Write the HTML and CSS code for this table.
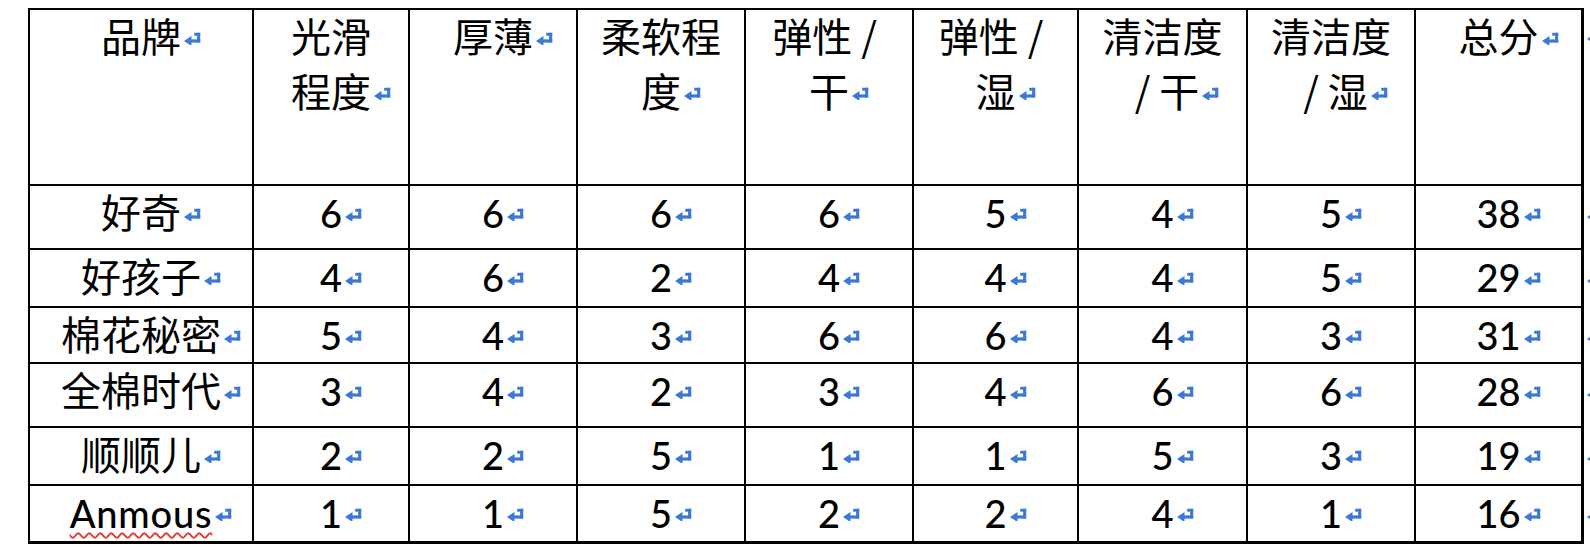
FILE: index.html
```html
<!DOCTYPE html>
<html lang="zh">
<head>
<meta charset="utf-8">
<title>品牌评分表</title>
<link rel="stylesheet" href="styles.css">
</head>
<body>
<svg class="defs" aria-hidden="true">
  <symbol id="pm" viewBox="0 0 17 13">
    <path d="M0 9 L7.5 4 L7.5 14 Z"/>
    <rect x="6" y="7.4" width="10.2" height="3.2"/>
    <rect x="13.1" y="0.8" width="3.1" height="9.6"/>
    <rect x="10.2" y="0.8" width="6" height="2.9"/>
  </symbol>
</svg>
<div class="sheet">
  <div class="grid">
    <div class="cell hd c1"><span class="zh">品牌</span><svg class="pm"><use href="#pm"/></svg></div>
    <div class="cell hd"><span class="zh">光滑<br>程度</span><svg class="pm"><use href="#pm"/></svg></div>
    <div class="cell hd"><span class="zh">厚薄</span><svg class="pm"><use href="#pm"/></svg></div>
    <div class="cell hd"><span class="zh">柔软程<br>度</span><svg class="pm"><use href="#pm"/></svg></div>
    <div class="cell hd"><span class="zh">弹性 /&nbsp;<br>干</span><svg class="pm"><use href="#pm"/></svg></div>
    <div class="cell hd"><span class="zh">弹性 /&nbsp;<br>湿</span><svg class="pm"><use href="#pm"/></svg></div>
    <div class="cell hd"><span class="zh">清洁度<br>&nbsp;/ 干</span><svg class="pm"><use href="#pm"/></svg></div>
    <div class="cell hd"><span class="zh">清洁度<br>&nbsp;/ 湿</span><svg class="pm"><use href="#pm"/></svg></div>
    <div class="cell hd c9"><span class="zh">总分</span><svg class="pm"><use href="#pm"/></svg></div>
    <div class="end"><svg class="pm"><use href="#pm"/></svg></div>

    <div class="cell c1"><span class="zh">好奇</span><svg class="pm"><use href="#pm"/></svg></div>
    <div class="cell">6<svg class="pm"><use href="#pm"/></svg></div>
    <div class="cell">6<svg class="pm"><use href="#pm"/></svg></div>
    <div class="cell">6<svg class="pm"><use href="#pm"/></svg></div>
    <div class="cell">6<svg class="pm"><use href="#pm"/></svg></div>
    <div class="cell">5<svg class="pm"><use href="#pm"/></svg></div>
    <div class="cell">4<svg class="pm"><use href="#pm"/></svg></div>
    <div class="cell">5<svg class="pm"><use href="#pm"/></svg></div>
    <div class="cell c9">38<svg class="pm"><use href="#pm"/></svg></div>
    <div class="end"><svg class="pm"><use href="#pm"/></svg></div>

    <div class="cell c1"><span class="zh">好孩子</span><svg class="pm"><use href="#pm"/></svg></div>
    <div class="cell">4<svg class="pm"><use href="#pm"/></svg></div>
    <div class="cell">6<svg class="pm"><use href="#pm"/></svg></div>
    <div class="cell">2<svg class="pm"><use href="#pm"/></svg></div>
    <div class="cell">4<svg class="pm"><use href="#pm"/></svg></div>
    <div class="cell">4<svg class="pm"><use href="#pm"/></svg></div>
    <div class="cell">4<svg class="pm"><use href="#pm"/></svg></div>
    <div class="cell">5<svg class="pm"><use href="#pm"/></svg></div>
    <div class="cell c9">29<svg class="pm"><use href="#pm"/></svg></div>
    <div class="end"><svg class="pm"><use href="#pm"/></svg></div>

    <div class="cell c1"><span class="zh">棉花秘密</span><svg class="pm"><use href="#pm"/></svg></div>
    <div class="cell">5<svg class="pm"><use href="#pm"/></svg></div>
    <div class="cell">4<svg class="pm"><use href="#pm"/></svg></div>
    <div class="cell">3<svg class="pm"><use href="#pm"/></svg></div>
    <div class="cell">6<svg class="pm"><use href="#pm"/></svg></div>
    <div class="cell">6<svg class="pm"><use href="#pm"/></svg></div>
    <div class="cell">4<svg class="pm"><use href="#pm"/></svg></div>
    <div class="cell">3<svg class="pm"><use href="#pm"/></svg></div>
    <div class="cell c9">31<svg class="pm"><use href="#pm"/></svg></div>
    <div class="end"><svg class="pm"><use href="#pm"/></svg></div>

    <div class="cell c1"><span class="zh">全棉时代</span><svg class="pm"><use href="#pm"/></svg></div>
    <div class="cell">3<svg class="pm"><use href="#pm"/></svg></div>
    <div class="cell">4<svg class="pm"><use href="#pm"/></svg></div>
    <div class="cell">2<svg class="pm"><use href="#pm"/></svg></div>
    <div class="cell">3<svg class="pm"><use href="#pm"/></svg></div>
    <div class="cell">4<svg class="pm"><use href="#pm"/></svg></div>
    <div class="cell">6<svg class="pm"><use href="#pm"/></svg></div>
    <div class="cell">6<svg class="pm"><use href="#pm"/></svg></div>
    <div class="cell c9">28<svg class="pm"><use href="#pm"/></svg></div>
    <div class="end"><svg class="pm"><use href="#pm"/></svg></div>

    <div class="cell c1"><span class="zh">顺顺儿</span><svg class="pm"><use href="#pm"/></svg></div>
    <div class="cell">2<svg class="pm"><use href="#pm"/></svg></div>
    <div class="cell">2<svg class="pm"><use href="#pm"/></svg></div>
    <div class="cell">5<svg class="pm"><use href="#pm"/></svg></div>
    <div class="cell">1<svg class="pm"><use href="#pm"/></svg></div>
    <div class="cell">1<svg class="pm"><use href="#pm"/></svg></div>
    <div class="cell">5<svg class="pm"><use href="#pm"/></svg></div>
    <div class="cell">3<svg class="pm"><use href="#pm"/></svg></div>
    <div class="cell c9">19<svg class="pm"><use href="#pm"/></svg></div>
    <div class="end"><svg class="pm"><use href="#pm"/></svg></div>

    <div class="cell c1 last"><span class="spell">Anmous</span><svg class="pm"><use href="#pm"/></svg></div>
    <div class="cell last">1<svg class="pm"><use href="#pm"/></svg></div>
    <div class="cell last">1<svg class="pm"><use href="#pm"/></svg></div>
    <div class="cell last">5<svg class="pm"><use href="#pm"/></svg></div>
    <div class="cell last">2<svg class="pm"><use href="#pm"/></svg></div>
    <div class="cell last">2<svg class="pm"><use href="#pm"/></svg></div>
    <div class="cell last">4<svg class="pm"><use href="#pm"/></svg></div>
    <div class="cell last">1<svg class="pm"><use href="#pm"/></svg></div>
    <div class="cell last c9">16<svg class="pm"><use href="#pm"/></svg></div>
    <div class="end"><svg class="pm"><use href="#pm"/></svg></div>
  </div>
</div>
</body>
</html>
```

FILE: styles.css
```css
html, body {
  margin: 0;
  padding: 0;
  background: #fff;
}

body {
  width: 1590px;
  height: 552px;
  overflow: hidden;
}

.defs {
  position: absolute;
  width: 0;
  height: 0;
  overflow: hidden;
}

.sheet {
  padding: 8px 0 0 28px;
}

.grid {
  display: grid;
  grid-template-columns: 226px 156px 168px 168px 168px 165px 169px 168px 168px 6px;
  grid-template-rows: 178px 64px 58px 56px 64px 58px 58px;
  font-family: Lato, "Noto Sans CJK SC", sans-serif;
  font-weight: 500;
  font-size: 38px;
  line-height: 55px;
  color: #000;
}

.cell {
  box-sizing: border-box;
  border-right: 2px solid #000;
  border-bottom: 2px solid #000;
  padding: 0 7px;
  text-align: center;
  white-space: nowrap;
}

.c1 {
  border-left: 2px solid #000;
}

.c9 {
  border-right-width: 3px;
}

.hd {
  border-top: 2px solid #000;
}

.last {
  border-bottom-width: 3px;
}

.zh {
  font-family: "Noto Sans CJK SC", sans-serif;
  font-weight: 400;
  font-size: 40px;
  line-height: 40px;
}

.spell {
  letter-spacing: 0.8px;
  text-decoration: underline wavy #de3b36;
  text-decoration-thickness: 1.6px;
  text-underline-offset: 4px;
  text-decoration-skip-ink: none;
}

.pm {
  width: 17px;
  height: 13px;
  margin-left: 3px;
  margin-right: -20px;
  vertical-align: 7px;
  fill: #3b78d8;
}

.end {
  overflow: hidden;
  padding-left: 3px;
  white-space: nowrap;
}

.end .pm {
  margin: 0;
}
```
